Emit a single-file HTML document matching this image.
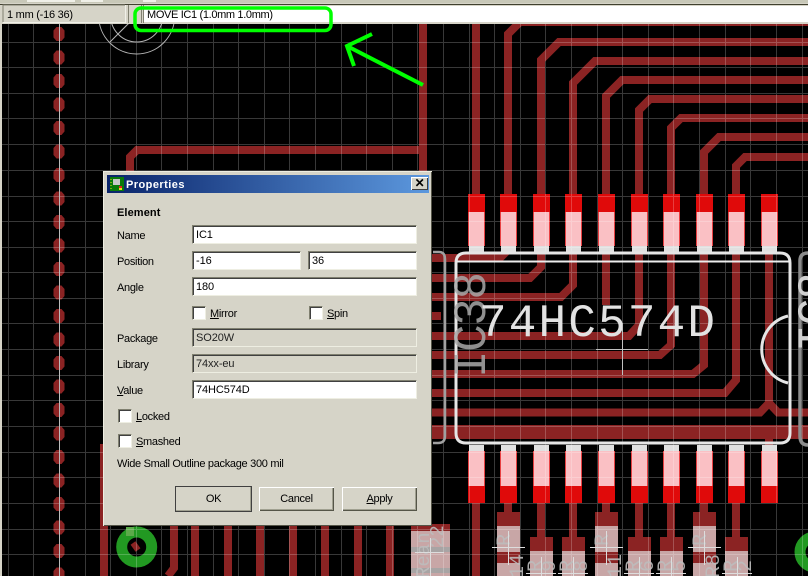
<!DOCTYPE html>
<html><head><meta charset="utf-8"><style>
html,body{margin:0;padding:0;background:#000}
#p{position:relative;width:808px;height:576px;overflow:hidden;background:#000;font:11px "Liberation Sans",sans-serif;color:#000}
svg{position:absolute;left:0;top:0}
#d{position:absolute;left:103px;top:171px;width:329px;height:355px;background:#d6d4c8;box-shadow:inset 1px 1px 0 #eeeee2,inset -1px -1px 0 #555548;letter-spacing:-.3px}
#t{position:absolute;left:4px;top:4px;width:322px;height:18px;background:linear-gradient(90deg,#0a246a,#5c98de);color:#fff;font-weight:bold;line-height:18px}
#t span{position:absolute;left:19px;top:1px;letter-spacing:.45px}
#x{position:absolute;left:304px;top:2px;width:17px;height:13px;background:#d6d4c8;box-shadow:inset 1px 1px 0 #fff,inset -1px -1px 0 #404040;color:#000;text-align:center;font:bold 12px/13px "Liberation Sans",sans-serif}
.l,.f{position:absolute;white-space:nowrap}
.l{line-height:14px;margin-top:1px}
.f{box-sizing:border-box;height:19px;background:#fff;border:1px solid;border-color:#808070 #eeeee2 #eeeee2 #808070;box-shadow:inset 1px 1px 0 #404040;padding-left:3px;line-height:19px;letter-spacing:-.1px}
.g{background:#d6d4c8;color:#222}
.c{position:absolute;box-sizing:border-box;width:14px;height:14px;background:#fff;border:1px solid;border-color:#808070 #eeeee2 #eeeee2 #808070;box-shadow:inset 1px 1px 0 #404040}
.b{position:absolute;box-sizing:border-box;height:24px;text-align:center;line-height:25px;background:#d6d4c8;box-shadow:inset 1px 1px 0 #fff,inset -1px -1px 0 #555548,inset -2px -2px 0 #a0a090}
</style></head><body><div id="p">
<svg width="808" height="576" viewBox="0 0 808 576">
<defs>
<polygon id="v" points="-2.500,-7 2.500,-7 5.500,-3.500 5.500,3.500 2.500,7 -2.500,7 -5.500,3.500 -5.500,-3.500" fill="#8b2323"/>
<g id="tp"><rect x="0" y="0" width="17" height="52" fill="#e00a0a"/><rect x=".7" y="18" width="15.600" height="34" fill="#fac0c4"/><rect x="1" y="52" width="15" height="8" fill="#e0e0e0"/></g>
<g id="bp"><rect x="1" y="0" width="15" height="6" fill="#e0e0e0"/><rect x="0" y="6" width="17" height="52" fill="#e00a0a"/><rect x=".7" y="6" width="15.600" height="35" fill="#fac0c4"/></g>
</defs>
<rect width="808" height="576" fill="#000"/>
<!-- traces -->
<g fill="none" stroke="#8b2323" stroke-width="8">
<path d="M423 0V180M130 180V157L137 150H423"/>
<path d="M476 0V200"/>
<path d="M508 200V34L520 22H808"/>
<path d="M541 200V60L559 42H808"/>
<path d="M573 200V83L595 61H808"/>
<path d="M606 200V96L622 80H808"/>
<path d="M639 200V110L650 99H808"/>
<path d="M671 200V128L681 118H808"/>
<path d="M704 200V152L719 137H808"/>
<path d="M736 200V166L745 157H808"/>
<path d="M430 258H500L508 250"/>
<path d="M430 278H530L541 267V250"/>
<path d="M430 297H561L573 285V250"/>
<path d="M606 250V305M430 316H441"/>
<path d="M430 336H629L639 325V250"/>
<path d="M430 355H660L671 345V250"/>
<path d="M430 374H693L704 365V250"/>
<path d="M430 393H725L736 380V250"/>
<path d="M430 412.500H760L769 403V250M769 403L778 412.500H808"/>
<path d="M430 432H808" stroke-width="14"/>
<path d="M769 425V450"/>
<path d="M476 500V576M508 500V520M541 500V540M573 500V540M606 500V520M639 500V540M671 500V540M704 500V520M736 500V540"/>
<path d="M104 444V576M174 526V568L168 576M195 526V576M228 526V576M260 526V576M293 526V576M325 526V576M358 526V576M390 526V576"/>
</g>
<!-- resistor blocks -->
<g fill="#8b2323">
<rect x="497" y="512" width="23" height="64"/><rect x="595" y="512" width="23" height="64"/><rect x="693" y="512" width="23" height="64"/>
<rect x="530" y="537" width="23" height="39"/><rect x="562" y="537" width="23" height="39"/><rect x="628" y="537" width="23" height="39"/><rect x="660" y="537" width="23" height="39"/><rect x="725" y="537" width="23" height="39"/>
<rect x="411" y="524" width="39" height="52"/>
</g>
<g fill="#c8a6a6">
<path d="M497 526h23v26h-23zM497 563h23v13h-23zM595 526h23v26h-23zM595 563h23v13h-23zM693 526h23v26h-23zM693 563h23v13h-23z"/>
<rect x="530" y="551" width="23" height="25"/><rect x="562" y="551" width="23" height="25"/><rect x="628" y="551" width="23" height="25"/><rect x="660" y="551" width="23" height="25"/><rect x="725" y="551" width="23" height="25"/>
<rect x="411" y="531" width="39" height="45"/>
</g>
<path d="M411 547h39v5h-39zM411 568h39v5h-39z" fill="#a8a4a4"/>
<!-- vias -->
<g>
<use href="#v" x="59" y="34"/><use href="#v" x="59" y="57.500"/><use href="#v" x="59" y="81"/><use href="#v" x="59" y="104.500"/><use href="#v" x="59" y="128"/><use href="#v" x="59" y="151.500"/><use href="#v" x="59" y="175"/><use href="#v" x="59" y="198.500"/><use href="#v" x="59" y="222"/><use href="#v" x="59" y="245.500"/><use href="#v" x="59" y="269"/><use href="#v" x="59" y="292.500"/><use href="#v" x="59" y="316"/><use href="#v" x="59" y="339.500"/><use href="#v" x="59" y="363"/><use href="#v" x="59" y="386.500"/><use href="#v" x="59" y="410"/><use href="#v" x="59" y="433.500"/><use href="#v" x="59" y="457"/><use href="#v" x="59" y="480.500"/><use href="#v" x="59" y="504"/><use href="#v" x="59" y="527.500"/><use href="#v" x="59" y="551"/><use href="#v" x="59" y="574.500"/>
</g>
<!-- green pads -->
<circle cx="136.700" cy="547" r="15" fill="none" stroke="#229922" stroke-width="11"/>
<path d="M133 543L138 550" stroke="#8b2323" stroke-width="6"/>
<rect x="126" y="527" width="8" height="9" fill="#5caa4a"/>
<circle cx="815" cy="552" r="15" fill="none" stroke="#229922" stroke-width="11"/>
<!-- pads -->
<use href="#tp" x="468" y="194"/><use href="#tp" x="500" y="194"/><use href="#tp" x="533" y="194"/><use href="#tp" x="565" y="194"/><use href="#tp" x="598" y="194"/><use href="#tp" x="631" y="194"/><use href="#tp" x="663" y="194"/><use href="#tp" x="696" y="194"/><use href="#tp" x="728" y="194"/><use href="#tp" x="761" y="194"/>
<use href="#bp" x="468" y="445"/><use href="#bp" x="500" y="445"/><use href="#bp" x="533" y="445"/><use href="#bp" x="565" y="445"/><use href="#bp" x="598" y="445"/><use href="#bp" x="631" y="445"/><use href="#bp" x="663" y="445"/><use href="#bp" x="696" y="445"/><use href="#bp" x="728" y="445"/><use href="#bp" x="761" y="445"/>
<!-- grid -->
<path fill="none" stroke="#fff" stroke-opacity=".22" stroke-width="1" d="M8.500 0V576M33.500 0V576M85.500 0V576M110.500 0V576M136.500 0V576M161.500 0V576M187.500 0V576M213.500 0V576M238.500 0V576M264.500 0V576M289.500 0V576M315.500 0V576M341.500 0V576M366.500 0V576M392.500 0V576M417.500 0V576M443.500 0V576M469.500 0V576M494.500 0V576M520.500 0V576M545.500 0V576M571.500 0V576M597.500 0V576M622.500 0V576M648.500 0V576M673.500 0V576M699.500 0V576M725.500 0V576M750.500 0V576M776.500 0V576M802.500 0V576M0 42.500H808M0 67.500H808M0 93.500H808M0 118.500H808M0 144.500H808M0 170.500H808M0 196.500H808M0 221.500H808M0 247.500H808M0 272.500H808M0 298.500H808M0 323.500H808M0 349.500H808M0 375.500H808M0 400.500H808M0 426.500H808M0 452.500H808M0 477.500H808M0 503.500H808M0 529.500H808M0 554.500H808"/>
<path d="M59.500 0V576" stroke="#bbb" stroke-width="1"/>
<!-- origin circles -->
<g fill="none" stroke="#b4b4b4" stroke-width="1"><circle cx="136.700" cy="16" r="38"/><circle cx="136.700" cy="16" r="26"/><path d="M110 42L162 -10"/></g>
<!-- IC outlines -->
<path d="M433 252H439Q445 252 445 259V436Q445 443 438 443H433" fill="none" stroke="#a0a0a0" stroke-width="2.500"/>
<path d="M808 253Q800 253 800 261V436Q800 445 808 445" fill="none" stroke="#8c8c8c" stroke-width="3.500"/>
<path d="M466 253H780Q790 253 790 263V433Q790 443 780 443H466Q456 443 456 433V263Q456 253 466 253Z" fill="none" stroke="#e6e6e6" stroke-width="3"/>
<path d="M456 261.500H790" stroke="#ececec" stroke-width="2"/>
<path d="M788 316A34.500 34.500 0 0 0 788 383" fill="none" stroke="#e4e4e4" stroke-width="3"/>
<text transform="translate(485,378) rotate(-90)" font-family="Liberation Mono" font-size="46" textLength="106" fill="#a8a8a8" fill-opacity=".85">IC38</text>
<text transform="translate(829,352) rotate(-90)" font-family="Liberation Mono" font-size="46" textLength="80" fill="#d0d0d0">IC8</text>
<text x="479" y="336" font-family="Liberation Mono" font-size="46" textLength="236" fill="#e2e2e2">74HC574D</text>
<path d="M596 349.500H648M622.500 323V375" stroke="#c0c0c0" stroke-width="1"/>
<!-- small labels -->
<g font-family="Liberation Mono" font-size="20" fill="#bdbdbd" fill-opacity=".9">
<text transform="translate(510,546) rotate(-90)">R</text><text transform="translate(523,578) rotate(-90)">14</text>
<text transform="translate(608,546) rotate(-90)">R</text><text transform="translate(621,578) rotate(-90)">11</text>
<text transform="translate(706,546) rotate(-90)">R</text><text transform="translate(719,578) rotate(-90)">R8</text>
<text transform="translate(541,572) rotate(-90)">R</text><text transform="translate(555,572) rotate(-90)">9</text>
<text transform="translate(573,572) rotate(-90)">R</text><text transform="translate(587,572) rotate(-90)">8</text>
<text transform="translate(639,572) rotate(-90)">R</text><text transform="translate(653,572) rotate(-90)">6</text>
<text transform="translate(671,572) rotate(-90)">R</text><text transform="translate(685,572) rotate(-90)">5</text>
<text transform="translate(737,572) rotate(-90)">R</text><text transform="translate(751,572) rotate(-90)">2</text>
<text transform="translate(443,548) rotate(-90)" font-size="19">22</text>
<text transform="translate(429,578) rotate(-90)" font-size="19">Rean</text>
</g>
<path d="M492 547.500H525M508.500 531V565M590 547.500H623M606.500 531V565M688 547.500H721M704.500 531V565M526 573.500H556M558 573.500H588M624 573.500H654M656 573.500H686M722 573.500H752M541.500 557V576M573.500 557V576M639.500 557V576M671.500 557V576M737.500 557V576M415 552.500H444M430.500 538V576" stroke="#ddd" stroke-width="1"/>
<!-- left edge / status bar -->
<rect x="0" y="0" width="2" height="576" fill="#d6d4c8"/>
<rect x="0" y="0" width="808" height="24" fill="#d6d4c8"/>
<rect x="0" y="0" width="808" height="3" fill="#c8c8b8"/>
<rect x="27" y="0" width="48" height="2" fill="#f0f0e8"/><rect x="81" y="0" width="22" height="2" fill="#f0f0e8"/><rect x="143" y="0" width="13" height="2" fill="#f0f0e8"/>
<rect x="0" y="4" width="808" height="1" fill="#40402f"/>
<rect x="3" y="5" width="122" height="17" fill="#d6d4c8"/>
<path d="M3 22V5H125" fill="none" stroke="#808070" stroke-width="1"/><path d="M3 22.500H125.500V5" fill="none" stroke="#f0f0e8" stroke-width="1"/>
<path d="M128.500 5V23M141.500 5V23" stroke="#808070" stroke-width="1"/>
<rect x="143" y="6" width="665" height="16" fill="#fff"/>
<path d="M143.500 5V23" stroke="#808070" stroke-width="1"/>
<text x="7" y="18" font-family="Liberation Sans" font-size="11" textLength="66" fill="#000">1 mm (-16 36)</text>
<text x="147" y="18" font-family="Liberation Sans" font-size="11" textLength="126" fill="#000">MOVE IC1 (1.0mm 1.0mm)</text>
</svg>
<div id="d">
<div id="t"><svg width="15" height="15" style="left:3px;top:2px"><rect width="14" height="14" fill="#0a7a0a"/><rect x="3" y="2" width="7" height="6" fill="#c8c8c8"/><rect x="9" y="9" width="3" height="2" fill="#e02020"/><rect x="9" y="11" width="3" height="2" fill="#e8e020"/><path d="M1 2v10" stroke="#e8e020" stroke-dasharray="1 2"/></svg><span>Properties</span><div id="x">✕</div></div>
<div class="l" style="left:14px;top:34px;font-weight:bold;letter-spacing:.1px">Element</div>
<div class="l" style="left:14px;top:57px">Name</div>
<div class="f" style="left:89px;top:54px;width:225px">IC1</div>
<div class="l" style="left:14px;top:83px">Position</div>
<div class="f" style="left:89px;top:80px;width:109px">-16</div>
<div class="f" style="left:205px;top:80px;width:109px">36</div>
<div class="l" style="left:14px;top:109px">Angle</div>
<div class="f" style="left:89px;top:106px;width:225px">180</div>
<div class="c" style="left:89px;top:135px"></div><div class="l" style="left:107px;top:135px"><u>M</u>irror</div>
<div class="c" style="left:206px;top:135px"></div><div class="l" style="left:224px;top:135px"><u>S</u>pin</div>
<div class="l" style="left:14px;top:160px">Package</div>
<div class="f g" style="left:89px;top:157px;width:225px">SO20W</div>
<div class="l" style="left:14px;top:186px">Library</div>
<div class="f g" style="left:89px;top:183px;width:225px">74xx-eu</div>
<div class="l" style="left:14px;top:212px"><u>V</u>alue</div>
<div class="f" style="left:89px;top:209px;width:225px">74HC574D</div>
<div class="c" style="left:15px;top:238px"></div><div class="l" style="left:33px;top:238px"><u>L</u>ocked</div>
<div class="c" style="left:15px;top:263px"></div><div class="l" style="left:33px;top:263px"><u>S</u>mashed</div>
<div class="l" style="left:14px;top:285px">Wide Small Outline package 300 mil</div>
<div class="b" style="left:72px;top:315px;width:77px;height:26px;outline:1px solid #404040;outline-offset:-1px;line-height:27px">OK</div>
<div class="b" style="left:156px;top:316px;width:75px">Cancel</div>
<div class="b" style="left:239px;top:316px;width:75px"><u>A</u>pply</div>
</div>
<svg width="808" height="576" viewBox="0 0 808 576" style="pointer-events:none">
<rect x="135" y="8" width="196" height="22.500" rx="6" fill="none" stroke="#00ff00" stroke-width="3.500"/>
<path d="M423 85L347 46M372 34L347 46L354 66" fill="none" stroke="#00ff00" stroke-width="4"/>
</svg>
</div></body></html>
